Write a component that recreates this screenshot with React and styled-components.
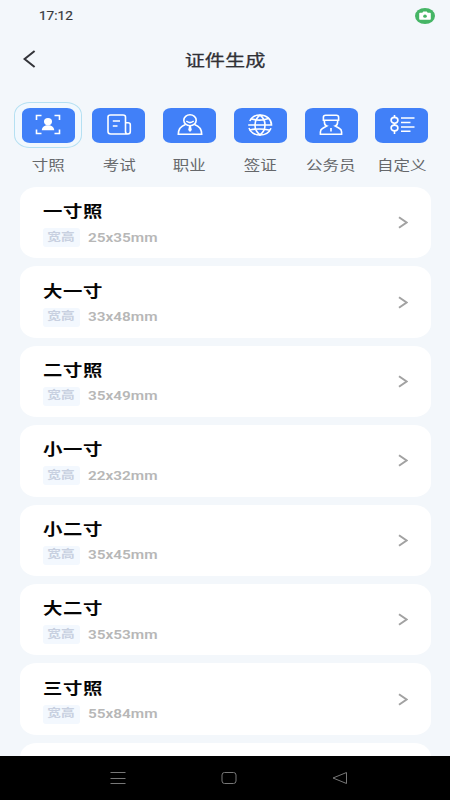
import React, { useState } from 'react'
import styled, { createGlobalStyle } from 'styled-components';

const sizes = [
    { name: '一寸照', size: '25x35mm' },
    { name: '大一寸', size: '33x48mm' },
    { name: '二寸照', size: '35x49mm' },
    { name: '小一寸', size: '22x32mm' },
    { name: '小二寸', size: '35x45mm' },
    { name: '大二寸', size: '35x53mm' },
    { name: '三寸照', size: '55x84mm' },
];

const PhotoIcon = () => (
    <TabIcon viewBox="0 0 26 22">
        <path d="M1.5 6V1.5H6.5M19.5 1.5H24.5V6M24.5 15.5V19.5H19.5M6.5 19.5H1.5V15.5" />
        <ellipse cx="13" cy="7.6" rx="4" ry="3.6" fill="#fff" stroke="none" />
        <path d="M6.8 16.2C7 13 9.5 11.2 13 11.2S19 13 19.2 16.2Z" fill="#fff" stroke="none" />
    </TabIcon>
);

const ExamIcon = () => (
    <TabIcon viewBox="0 0 26 22">
        <path d="M21.5 20H4.8Q2 20 2 17.6V3Q2 1 4.5 1H17Q19.5 1 19.5 3V17.6Q19.5 20 21.8 20Q24.3 20 24.3 17.6V10.8Q24.3 8.8 22 8.8H19.5" />
        <path d="M6.8 7H14M6.8 12H11.5" />
    </TabIcon>
);

const JobIcon = () => (
    <TabIcon viewBox="0 0 26 22">
        <ellipse cx="13" cy="6.3" rx="6.2" ry="5.5" />
        <path d="M9.3 7Q13 10.2 16.7 7M8.5 10.5C4 12 1.3 15 1.3 20.3H24.7C24.7 15 22 12 17.5 10.5" />
        <path d="M12 12H14L14.8 16L13 18L11.2 16Z" fill="#fff" stroke="none" />
    </TabIcon>
);

const VisaIcon = () => (
    <TabIcon viewBox="0 0 26 22">
        <path d="M2.8 7C4.5 3.3 8.3 1 13 1C19.8 1 24.5 5.3 24.5 11H1.2M24 14.2C22.2 18.5 18 21 13 21C7.5 21 3.2 18 2 14" />
        <path d="M13 1C6.3 6.2 6.3 15.8 13 21C19.7 15.8 19.7 6.2 13 1M4 4.8Q13 7.5 21.5 4.5M2.5 16Q13 13.8 23 16.3" />
    </TabIcon>
);

const OfficerIcon = () => (
    <TabIcon viewBox="0 0 26 22">
        <path d="M5.4 6.2V3.2Q5.4 1.2 7.7 1.2H18.3Q20.6 1.2 20.6 3.2V6.2ZM6.4 6.5V8Q6.4 11.3 8.8 12L4.8 14.3Q2.4 15.5 2.4 18V20.3H23.6V18Q23.6 15.5 21.2 14.3L17.2 12Q19.6 11.3 19.6 8V6.5" />
        <path d="M13 14V17.5" />
    </TabIcon>
);

const CustomIcon = () => (
    <TabIcon viewBox="0 0 26 22">
        <path d="M5.5 1V3.5M5.5 9V11M5.5 17V20" />
        <ellipse cx="5.5" cy="6.3" rx="3.4" ry="2.9" />
        <ellipse cx="5.5" cy="14" rx="3.4" ry="2.9" />
        <path d="M12 4H25.5M12 8.5H21.5M12 13H25.5M12 17.3H21.5" />
    </TabIcon>
);

const tabs = [
    { label: '寸照', Icon: PhotoIcon },
    { label: '考试', Icon: ExamIcon },
    { label: '职业', Icon: JobIcon },
    { label: '签证', Icon: VisaIcon },
    { label: '公务员', Icon: OfficerIcon },
    { label: '自定义', Icon: CustomIcon },
];

const App = () => {
    const [active, setActive] = useState(0);

    return (
        <Screen>
            <GlobalStyle />
            <StatusBar>
                <Clock>17:12</Clock>
                <svg width="20" height="16" viewBox="0 0 20 16">
                    <ellipse cx="10" cy="8" rx="10" ry="8" fill="#45b565" />
                    <path d="M5 4.7H7.3L8.3 3.6H11.7L12.7 4.7H15Q15.8 4.7 15.8 5.5V11Q15.8 11.8 15 11.8H5Q4.2 11.8 4.2 11V5.5Q4.2 4.7 5 4.7Z" fill="#fff" />
                    <ellipse cx="10" cy="8.2" rx="1.8" ry="1.6" fill="#45b565" />
                </svg>
            </StatusBar>
            <Header>
                <BackButton aria-label="返回">
                    <svg width="14" height="20" viewBox="0 0 14 20">
                        <path d="M12.6 2L2.6 10L12.6 18" fill="none" stroke="#333439" strokeWidth="2" />
                    </svg>
                </BackButton>
                <Title>证件生成</Title>
            </Header>
            <Tabs>
                {tabs.map(({ label, Icon }, i) => (
                    <Tab key={label} onClick={() => setActive(i)}>
                        <Ring $active={active === i}>
                            <Tile><Icon /></Tile>
                        </Ring>
                        <TabLabel>{label}</TabLabel>
                    </Tab>
                ))}
            </Tabs>
            <List>
                {sizes.map((item) => (
                    <Card key={item.name}>
                        <div>
                            <Name>{item.name}</Name>
                            <Info>
                                <Tag><span>宽高</span></Tag>
                                <Size>{item.size}</Size>
                            </Info>
                        </div>
                        <svg width="10" height="13" viewBox="0 0 10 13">
                            <path d="M1 1.2L8.6 6.5L1 11.8" fill="none" stroke="#a2a2a2" strokeWidth="2" />
                        </svg>
                    </Card>
                ))}
                <Card />
            </List>
            <NavBar>
                <svg width="16" height="14" viewBox="0 0 16 14">
                    <path d="M0.5 1.5H15.5M0.5 7.5H15.5M0.5 12.5H15.5" />
                </svg>
                <svg width="16" height="14" viewBox="0 0 16 14">
                    <rect x="1" y="1.5" width="14" height="11" rx="2.5" />
                </svg>
                <svg width="16" height="14" viewBox="0 0 16 14">
                    <path d="M14.5 1.5V12.5L1 7Z" />
                </svg>
            </NavBar>
        </Screen>
    );
}

const GlobalStyle = createGlobalStyle`
    *{
        box-sizing: border-box;
    }
    body{
        margin: 0;
        font-family: Roboto, "Noto Sans CJK SC", sans-serif;
    }
    button{
        padding: 0;
        border: none;
        background: none;
        font: inherit;
    }
`;
const Screen = styled.div`
    display: flex;
    flex-direction: column;
    width: 450px;
    height: 800px;
    overflow: hidden;
    background: #f3f7fb;
`;
const StatusBar = styled.div`
    display: flex;
    flex: none;
    align-items: center;
    justify-content: space-between;
    height: 32px;
    padding: 0 15px 0 39px;
`;
const Clock = styled.span`
    color: #36383b;
    font-size: 12px;
    font-weight: 400;
    transform: scaleX(1.13);
    transform-origin: left;
    -webkit-text-stroke: 0.2px #36383b;
`;
const Header = styled.header`
    display: grid;
    flex: none;
    grid-template-columns: 60px 1fr 60px;
    align-items: center;
    height: 54px;
`;
const BackButton = styled.button`
    display: flex;
    padding-left: 22px;
`;
const Title = styled.h1`
    margin: 3px 0 0;
    color: #303136;
    font-size: 16px;
    font-weight: 400;
    line-height: 24px;
    text-align: center;
    transform: scaleX(1.26);
    -webkit-text-stroke: 0.25px #303136;
`;
const Tabs = styled.nav`
    display: grid;
    flex: none;
    grid-template-columns: repeat(6, 70.75px);
    height: 101px;
    padding: 16px 0 0 12.7px;
`;
const Tab = styled.button`
    display: flex;
    flex-direction: column;
    align-items: center;
`;
const Ring = styled.span`
    display: flex;
    align-items: center;
    justify-content: center;
    width: 68px;
    height: 46px;
    border: 1px solid ${({ $active }) => ($active ? '#b5e0f2' : 'transparent')};
    border-radius: 16px / 13px;
    background: ${({ $active }) => ($active ? '#f1f8fe' : 'transparent')};
`;
const Tile = styled.span`
    display: flex;
    align-items: center;
    justify-content: center;
    width: 53px;
    height: 35px;
    border-radius: 8px / 6px;
    background: #4180f8;
`;
const TabIcon = styled.svg`
    width: 26px;
    height: 22px;
    fill: none;
    stroke: #fff;
    stroke-width: 1.6;
`;
const TabLabel = styled.span`
    margin-top: 8px;
    color: #66686b;
    font-size: 13.2px;
    line-height: 20px;
    white-space: nowrap;
    transform: scaleX(1.25);
`;
const List = styled.main`
    display: flex;
    flex: 1;
    flex-direction: column;
    gap: 8px;
    min-height: 0;
    padding: 0 19.5px;
    overflow: hidden;
`;
const Card = styled.section`
    display: flex;
    flex: none;
    align-items: center;
    justify-content: space-between;
    height: 71.4px;
    padding: 3px 22.5px 0 23px;
    border-radius: 17px / 14px;
    background: #fff;

    > svg{
        margin-bottom: 3px;
    }
`;
const Name = styled.div`
    width: max-content;
    color: #050505;
    font-size: 15.5px;
    font-weight: 700;
    letter-spacing: 0.5px;
    line-height: 22px;
    transform: scaleX(1.25);
    transform-origin: left;
`;
const Info = styled.div`
    display: flex;
    align-items: center;
    gap: 7.5px;
    margin-top: 5px;
`;
const Tag = styled.span`
    display: flex;
    align-items: center;
    justify-content: center;
    width: 37.5px;
    height: 19px;
    border-radius: 3px;
    background: #f3f8fe;

    span{
        color: #c8d0e0;
        font-size: 11px;
        font-weight: 700;
        line-height: 18px;
        transform: scaleX(1.24);
    }
`;
const Size = styled.span`
    color: #b7b7b7;
    font-size: 12px;
    font-weight: 600;
    transform: scaleX(1.28);
    transform-origin: left;
`;
const NavBar = styled.footer`
    display: flex;
    flex: none;
    align-items: center;
    justify-content: center;
    gap: 95px;
    height: 44px;
    padding-left: 8px;
    background: #000;

    svg{
        fill: none;
        stroke: #777;
        stroke-width: 1;
    }
`;

export default App;
